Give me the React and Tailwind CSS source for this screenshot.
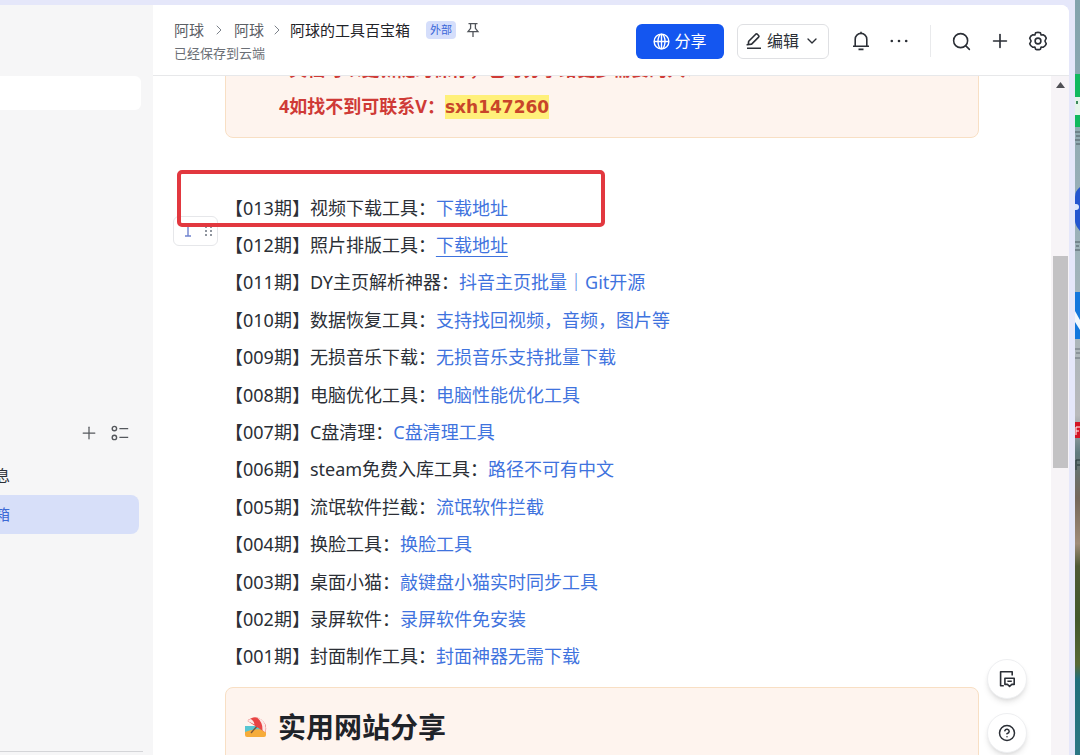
import { ChevronDown, ChevronRight, CircleHelp, Plus, Search } from 'lucide-react';

const issues = [
  { no: '013', name: '视频下载工具：', link: '下载地址' },
  { no: '012', name: '照片排版工具：', link: '下载地址', underline: true },
  { no: '011', name: 'DY主页解析神器：', link: '抖音主页批量｜Git开源' },
  { no: '010', name: '数据恢复工具：', link: '支持找回视频，音频，图片等' },
  { no: '009', name: '无损音乐下载：', link: '无损音乐支持批量下载' },
  { no: '008', name: '电脑优化工具：', link: '电脑性能优化工具' },
  { no: '007', name: 'C盘清理：', link: 'C盘清理工具' },
  { no: '006', name: 'steam免费入库工具：', link: '路径不可有中文' },
  { no: '005', name: '流氓软件拦截：', link: '流氓软件拦截' },
  { no: '004', name: '换脸工具：', link: '换脸工具' },
  { no: '003', name: '桌面小猫：', link: '敲键盘小猫实时同步工具' },
  { no: '002', name: '录屏软件：', link: '录屏软件免安装' },
  { no: '001', name: '封面制作工具：', link: '封面神器无需下载' },
];

function PinIcon() {
  return (
    <svg width="14" height="16" viewBox="0 0 14 16" fill="none" stroke="#50545a" strokeWidth="1.3">
      <path d="M2.5 1.7h9M4.6 1.7v4.6L2 9.7h10L9.4 6.3V1.7M7 9.7V15" />
    </svg>
  );
}

function GlobeIcon() {
  return (
    <svg width="17" height="17" viewBox="0 0 17 17" fill="none" stroke="currentColor" strokeWidth="1.4">
      <circle cx="8.5" cy="8.5" r="7.4" />
      <ellipse cx="8.5" cy="8.5" rx="3.5" ry="7.4" />
      <path d="M1.1 8.5h14.8M8.5 1.1v14.8" />
    </svg>
  );
}

function EditIcon() {
  return (
    <svg width="16" height="18" viewBox="0 0 16 18" fill="none" stroke="currentColor" strokeWidth="1.6" strokeLinejoin="round">
      <path d="M2.2 12.8l.5-3.6 7-7q.8-.7 1.6 0l1.3 1.3q.8.8 0 1.6l-7 7-4.4.7zM1 16.2h14" />
    </svg>
  );
}

function BellIcon() {
  return (
    <svg width="20" height="20" viewBox="0 0 20 20" fill="none" stroke="currentColor" strokeWidth="1.6" strokeLinejoin="round">
      <path d="M4.2 15V8.2a5.8 5.8 0 0 1 11.6 0V15M2 15.2h16M7.5 18.4h5M10 .8v1.6" />
    </svg>
  );
}

function MoreIcon() {
  return (
    <svg width="20" height="20" viewBox="0 0 20 20" fill="currentColor">
      <circle cx="2.8" cy="10" r="1.3" />
      <circle cx="10" cy="10" r="1.3" />
      <circle cx="17.2" cy="10" r="1.3" />
    </svg>
  );
}

function GearIcon() {
  return (
    <svg width="20" height="20" viewBox="0 0 20 20" fill="none" stroke="currentColor" strokeWidth="1.6" strokeLinejoin="round">
      <path d="M7.6 1.8Q10 .9 12.4 1.8L13.1 4L15.2 3.8Q17.6 4.8 18.3 7.2L16.9 10L18.3 12.8Q17.6 15.2 15.2 16.2L13.1 16L12.4 18.2Q10 19.1 7.6 18.2L6.9 16L4.8 16.2Q2.4 15.2 1.7 12.8L3.1 10L1.7 7.2Q2.4 4.8 4.8 3.8L6.9 4z" />
      <circle cx="10" cy="10" r="2.9" />
    </svg>
  );
}

function OutlineIcon() {
  return (
    <svg width="18" height="16" viewBox="0 0 18 16" fill="none" stroke="#55585d" strokeWidth="1.4">
      <circle cx="3.4" cy="3.6" r="2.2" />
      <circle cx="3.4" cy="12.4" r="2.2" />
      <path d="M8.4 3.6h8.8M8.4 12.4h8.8" />
    </svg>
  );
}

function CommentIcon() {
  return (
    <svg width="18" height="18" viewBox="0 0 18 18" fill="none" stroke="#2b2f36" strokeWidth="1.6" strokeLinejoin="round">
      <path d="M14.2 5.5V1.8H2.6v14h3.2" />
      <path d="M6.9 8.2h9.3v6.2h-2.4l-2.2 1.9-2.2-1.9H6.9zM9.4 11.2h4.4" />
    </svg>
  );
}

function BeachIcon() {
  return (
    <svg width="24" height="24" viewBox="0 0 24 24">
      <path d="M1 11h21v7H1z" fill="#58c6d2" />
      <path d="M1 17q9-4 21-2v5q0 2-2 2H3q-2 0-2-2z" fill="#f6ac3a" />
      <path d="M14 10L7 18" stroke="#7a5538" strokeWidth="1.4" />
      <path d="M3.5 6Q10-.5 17 4.5T21.5 17.5z" fill="#e84545" />
      <path d="M6 4Q9.5 4.5 10.5 9.6L3.5 6z" fill="#fbe9e6" />
      <path d="M13 2.6Q21 5 21.8 12.5L21.5 17.5L18.5 15.2Q19 7.5 13 2.6z" fill="#fbe9e6" />
    </svg>
  );
}

// strip of wallpaper and shortcuts visible beside the window
function Desktop() {
  return (
    <svg className="h-full w-[5px] shrink-0" viewBox="0 0 5 755" preserveAspectRatio="none" aria-hidden="true">
      <defs>
        <linearGradient id="wall" x1="0" y1="0" x2="0" y2="1">
          <stop offset="0" stopColor="#82a3ad" />
          <stop offset="0.35" stopColor="#9fb3ba" />
          <stop offset="0.55" stopColor="#b9b9bb" />
          <stop offset="0.6" stopColor="#607b80" />
          <stop offset="0.66" stopColor="#75675a" />
          <stop offset="0.72" stopColor="#a08c78" />
          <stop offset="0.75" stopColor="#4f5a35" />
          <stop offset="0.82" stopColor="#43582b" />
          <stop offset="0.88" stopColor="#596a35" />
          <stop offset="0.9" stopColor="#1f6f7c" />
          <stop offset="1" stopColor="#2c7784" />
        </linearGradient>
      </defs>
      <rect width="5" height="755" fill="url(#wall)" />
      <rect y="74" width="5" height="53" fill="#10b95f" />
      <rect y="97" width="5" height="18" fill="#e4f4ea" />
      <rect x="1" y="101" width="2" height="3" fill="#3b8a5c" />
      <path d="M0 132h5M1 136h4M0 140h5M1 144h4" stroke="#4d5a62" />
      <path d="M5 231Q0 225 0 221v-24q0-6 5-10z" fill="#2456cf" />
      <circle cx="1" cy="207" r="3" fill="#dbe6fb" />
      <path d="M0 242h5M1 246h3M0 250h5" stroke="#4d5a62" />
      <rect y="292" width="5" height="47" fill="#1377dd" />
      <path d="M0 311l5 9v10l-5-8z" fill="#f2f7fc" />
      <path d="M0 349h5M1 353h4M0 358h5" stroke="#68737a" />
      <rect y="422" width="5" height="16" fill="#d41425" />
      <path d="M1 427h4M1 431h3M1 427v8" stroke="#fff" />
      <path d="M1 460h4M2 465h3M1 460v10" stroke="#26363b" />
    </svg>
  );
}

function Sidebar() {
  return (
    <aside className="flex w-[153px] shrink-0 flex-col overflow-hidden bg-[#f6f6f7]">
      <div className="mt-[71px] mr-3 h-[34px] rounded-r-md bg-white" />
      <div className="mt-[313px] mr-6 flex items-center justify-end gap-3">
        <button type="button" aria-label="新建">
          <Plus size={20} strokeWidth={1.5} color="#55585d" />
        </button>
        <button type="button" aria-label="目录">
          <OutlineIcon />
        </button>
      </div>
      <nav className="mt-[13px] mr-3.5 flex flex-col text-[15px]">
        <a href="#info" className="flex h-[39px] items-center text-[#2b2f36]">
          <span className="flex w-2.5 justify-end overflow-hidden whitespace-nowrap">信息</span>
        </a>
        <a href="#toolbox" className="flex h-[39px] items-center rounded-r-lg bg-[#d7dff9] text-[#3b69d6]">
          <span className="flex w-2.5 justify-end overflow-hidden whitespace-nowrap">阿球的工具百宝箱</span>
        </a>
      </nav>
      <div className="mt-auto mr-2.5 mb-[3px] border-t border-[#d4d5d8]" />
    </aside>
  );
}

function Header() {
  return (
    <header className="flex h-[71px] shrink-0 items-center border-b border-[#e7e8ea] bg-white pt-0.5 pr-[21px] pl-[21px] text-[#2b2f36]">
      <div className="flex flex-col whitespace-nowrap">
        <div className="flex h-6 items-center text-[15px]">
          <a href="#home" className="text-[#5c6066]">阿球</a>
          <ChevronRight size={16} strokeWidth={1.5} color="#7c828a" className="mx-[7px]" />
          <a href="#wiki" className="text-[#5c6066]">阿球</a>
          <ChevronRight size={16} strokeWidth={1.5} color="#7c828a" className="mx-[5px]" />
          <h1 className="text-[#1f2329]">阿球的工具百宝箱</h1>
          <span className="mr-2.5 ml-4 flex h-[18px] items-center rounded bg-[#d5defb] px-1 text-[11px] text-[#3a66d8]">外部</span>
          <button type="button" aria-label="固定">
            <PinIcon />
          </button>
        </div>
        <p className="h-[22px] text-[13px] leading-[22px] text-[#6b6f76]">已经保存到云端</p>
      </div>
      <div className="ml-auto flex items-center">
        <button type="button" className="flex h-[35px] w-[88px] items-center justify-center gap-1 rounded-md bg-[#1456f0] text-base text-white">
          <GlobeIcon />
          分享
        </button>
        <button type="button" className="mr-[22px] ml-[13px] flex h-[35px] w-[92px] items-center justify-center gap-[5px] rounded-md border border-[#dfe0e3] text-base">
          <EditIcon />
          编辑
          <ChevronDown size={16} strokeWidth={2} />
        </button>
        <button type="button" aria-label="通知">
          <BellIcon />
        </button>
        <button type="button" aria-label="更多" className="ml-[18px]">
          <MoreIcon />
        </button>
        <div className="mr-5 ml-[21px] h-8 w-px bg-[#e9eaec]" />
        <div className="flex items-center gap-[17px]">
          <button type="button" aria-label="搜索">
            <Search size={21} strokeWidth={1.8} />
          </button>
          <button type="button" aria-label="添加">
            <Plus size={22} strokeWidth={1.8} />
          </button>
          <button type="button" aria-label="设置">
            <GearIcon />
          </button>
        </div>
      </div>
    </header>
  );
}

function IssueList() {
  return (
    <div className="relative mt-[51px]">
      <div className="absolute top-[27px] -left-[52px] flex h-[30px] w-[45px] items-center justify-between rounded-md border border-[#e6e7ea] bg-white pr-1 pl-2.5">
        <svg width="8" height="12" viewBox="0 0 8 12" fill="none" stroke="#6f83cf" strokeWidth="1.4">
          <path d="M1 1h6M4 1v10M1 11h6" />
        </svg>
        <svg width="8" height="10" viewBox="0 0 8 10" fill="#8f959e">
          <path d="M0 0h2v2H0zM5 0h2v2H5zM0 4h2v2H0zM5 4h2v2H5zM0 8h2v2H0zM5 8h2v2H5z" />
        </svg>
      </div>
      <ul className="grid h-[486px] auto-rows-fr text-lg whitespace-nowrap text-[#2b2f36]">
        {issues.map((item) => (
          <li key={item.no} className="flex items-center">
            <span>【{item.no}期】{item.name}</span>
            <a
              href={`#${item.no}`}
              className={item.underline ? 'text-[#3f73de] underline underline-offset-4' : 'text-[#3f73de]'}
            >
              {item.link}
            </a>
          </li>
        ))}
      </ul>
      {/* highlight frame round the newest entry */}
      <div className="pointer-events-none absolute -top-[19px] -left-12 h-[57px] w-[428px] rounded-[5px] border-4 border-[#e2383f]" />
    </div>
  );
}

export default function App() {
  return (
    <div className="flex h-screen overflow-hidden bg-[#e5e7fa] font-['Noto_Sans','Noto_Sans_CJK_SC',sans-serif]">
      <div className="flex min-w-0 flex-1 pt-[5px]">
        <Sidebar />
        <main className="flex min-w-0 flex-1 flex-col overflow-hidden rounded-tr-lg bg-white">
          <Header />
          <div className="relative flex min-h-0 flex-1">
            <div className="min-w-0 flex-1 overflow-hidden px-[72px]">
              <section className="-mt-10 rounded-lg border border-[#f8dfc4] bg-[#fef4ee] pt-3.5 pb-3 pl-[53px] text-lg font-bold text-[#cf3a36]">
                <p className="h-[37px] leading-[37px]">3文档可以更新随时保存，也可分享给更多需要的人！</p>
                <p className="h-[37px] leading-[37px]">
                  4如找不到可联系V：
                  <mark className="bg-[#fff07a] py-0.5 font-['DejaVu_Sans',sans-serif] text-[17px] text-[#c8452a]">sxh147260</mark>
                </p>
              </section>
              <IssueList />
              <section className="mt-3 flex h-40 items-start rounded-lg border border-[#f8dfc4] bg-[#fef4ee] pt-[19px] pl-[18px]">
                <div className="flex h-10 items-center gap-2.5">
                  <BeachIcon />
                  <h2 className="text-[28px] leading-10 font-bold text-[#1f2329]">实用网站分享</h2>
                </div>
              </section>
            </div>

            <div className="flex w-[18px] shrink-0 flex-col items-center bg-[#f7f4f7]">
              <svg className="mt-1.5" width="9" height="6" viewBox="0 0 9 6" fill="#505055">
                <path d="M4.5 0L9 6H0z" />
              </svg>
              <div className="mt-[168px] h-[212px] w-[15px] bg-[#c3c2c4]" />
            </div>

            <div className="absolute right-[42px] bottom-0.5 flex flex-col gap-3.5">
              <button type="button" aria-label="评论" className="flex size-10 items-center justify-center rounded-full border border-[#eeeff1] bg-white shadow-md">
                <CommentIcon />
              </button>
              <button type="button" aria-label="帮助" className="flex size-10 items-center justify-center rounded-full border border-[#eeeff1] bg-white shadow-md">
                <CircleHelp size={18} strokeWidth={2} color="#2b2f36" />
              </button>
            </div>
          </div>
        </main>
      </div>
      <div className="w-1.5 shrink-0" />
      <Desktop />
    </div>
  );
}
